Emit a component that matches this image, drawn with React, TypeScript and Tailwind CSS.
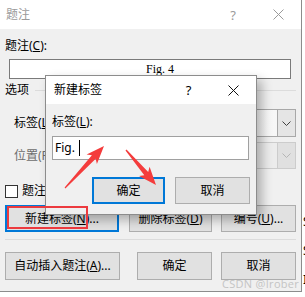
import React from "react";

function XIcon({ color }: { color: string }) {
  return (
    <svg width="11" height="11" viewBox="0 0 11 11">
      <path d="M0.5 0.5 L10.5 10.5 M10.5 0.5 L0.5 10.5" stroke={color} strokeWidth="1" fill="none" />
    </svg>
  );
}

function Chevron({ color }: { color: string }) {
  return (
    <svg width="9" height="5" viewBox="0 0 9 5">
      <path d="M0.5 0.5 L4.5 4.5 L8.5 0.5" stroke={color} strokeWidth="1" fill="none" />
    </svg>
  );
}

function Btn({
  w,
  h,
  focused,
  children,
}: {
  w: string;
  h: string;
  focused?: boolean;
  children: React.ReactNode;
}) {
  return (
    <div
      className={`${w} ${h} flex items-center justify-center bg-[#e1e1e1] ${
        focused ? "border-2 border-[#0078d7]" : "border border-[#adadad]"
      } text-black`}
    >
      {children}
    </div>
  );
}

function Arrow({ x1, y1, x2, y2 }: { x1: number; y1: number; x2: number; y2: number }) {
  const dx = x2 - x1;
  const dy = y2 - y1;
  const L = Math.hypot(dx, dy);
  const ux = dx / L;
  const uy = dy / L;
  const nx = -uy;
  const ny = ux;
  const hd = 15;
  const w1 = 2.6;
  const w2 = 7;
  const pt = (a: number, b: number) => `${(x1 + ux * a + nx * b).toFixed(1)},${(y1 + uy * a + ny * b).toFixed(1)}`;
  const pts = [
    pt(0, 0.6),
    pt(L - hd, w1),
    pt(L - hd - 3, w2),
    pt(L, 0),
    pt(L - hd - 3, -w2),
    pt(L - hd, -w1),
    pt(0, -0.6),
  ].join(" ");
  return <polygon points={pts} fill="#f43c3c" />;
}

export default function App() {
  return (
    <div className="relative w-[305px] h-[297px] overflow-hidden bg-white font-['Noto_Sans','Noto_Sans_CJK_SC',sans-serif] text-[12px] leading-[16px] text-black">
      {/* Main dialog */}
      <div className="w-[302px] h-[292px] flex flex-col border-r border-b border-[#8c8c8c] bg-[#f0f0f0]">
        {/* title bar */}
        <div className="h-[29px] flex items-center bg-white shrink-0">
          <div className="flex-1 pl-[6px] text-[#9a9a9a]">题注</div>
          <div className="w-[46px] flex justify-center text-[#9a9a9a] text-[13px]">?</div>
          <div className="w-[45px] flex justify-center">
            <XIcon color="#9a9a9a" />
          </div>
        </div>
        {/* body */}
        <div className="flex flex-col pl-[5px]">
          <div className="mt-[9px] h-[16px]">
            题注(<span className="underline">C</span>):
          </div>
          <div className="mt-[5px] ml-[4px] w-[282px] h-[20px] bg-white border border-[#7a7a7a] flex items-center justify-center pl-[20px] font-['Liberation_Serif',serif] text-[12px]">
            Fig. 4
          </div>
          <div className="mt-[3px] h-[16px] flex items-center">
            <span>选项</span>
            <div className="ml-[6px] w-[261px] h-px bg-[#dcdcdc]" />
          </div>
          <div className="mt-[11px] h-[28px] flex items-center pl-[9px]">
            <span className="w-[61px]">
              标签(<span className="underline">L</span>)
            </span>
            <div className="flex-1 mr-[5px] h-[28px] flex border border-[#a8a8a8] bg-white">
              <div className="flex-1 bg-gradient-to-r from-white to-[#f7f7f7]" />
              <div className="w-[18px] bg-[#e5e5e5] border-l border-[#a8a8a8] flex items-center justify-center">
                <Chevron color="#404040" />
              </div>
            </div>
          </div>
          <div className="mt-[5px] h-[27px] flex items-center pl-[9px]">
            <span className="w-[61px] text-[#6d6d6d]">位置(P)</span>
            <div className="flex-1 mr-[5px] h-[27px] flex border border-[#cccccc] bg-[#ececec]">
              <div className="flex-1" />
              <div className="w-[18px] bg-[#e0e0e0] border-l border-[#cccccc] flex items-center justify-center">
                <Chevron color="#b5b5b5" />
              </div>
            </div>
          </div>
          <div className="mt-[14px] h-[16px] flex items-center">
            <div className="w-[13px] h-[13px] bg-white border border-[#333333]" />
            <span className="ml-[4px]">题注中不包含标签(E)</span>
          </div>
          <div className="mt-[6px] flex items-center">
            <Btn w="w-[114px]" h="h-[27px]" focused>
              新建标签(<span className="underline">N</span>)...
            </Btn>
            <div className="ml-[10px]">
              <Btn w="w-[83px]" h="h-[27px]">
                删除标签(<span className="underline">D</span>)
              </Btn>
            </div>
            <div className="ml-[9px]">
              <Btn w="w-[75px]" h="h-[27px]">
                编号(<span className="underline">U</span>)...
              </Btn>
            </div>
          </div>
          <div className="mt-[7px] w-[291px] h-px bg-[#dcdcdc]" />
          <div className="mt-[12px] flex items-center">
            <Btn w="w-[115px]" h="h-[28px]">
              自动插入题注(<span className="underline">A</span>)...
            </Btn>
            <div className="ml-[17px]">
              <Btn w="w-[75px]" h="h-[28px]">确定</Btn>
            </div>
            <div className="ml-[9px]">
              <Btn w="w-[75px]" h="h-[28px]">取消</Btn>
            </div>
          </div>
        </div>
      </div>

      {/* clipped text on the right edge */}
      <span className="absolute left-[303px] top-[214px] text-[12px]">S</span>
      <span className="absolute left-[303px] top-[243px] text-[12px]">S</span>
      <span className="absolute left-[303px] top-[272px] text-[12px]">I</span>

      {/* Sub dialog */}
      <div className="absolute left-[45px] top-[75px] w-[212px] h-[140px] flex flex-col border border-[#8c8c8c] bg-[#f0f0f0] shadow-[5px_5px_10px_rgba(0,0,0,0.28)]">
        <div className="h-[28px] flex items-center bg-white shrink-0">
          <div className="flex-1 pl-[8px]">新建标签</div>
          <div className="w-[45px] flex justify-center text-[13px]">?</div>
          <div className="w-[45px] flex justify-center">
            <XIcon color="#111111" />
          </div>
        </div>
        <div className="flex flex-col pl-[6px]">
          <div className="mt-[10px] h-[16px]">
            标签(<span className="underline">L</span>):
          </div>
          <div className="mt-[6px] w-[197px] h-[24px] bg-white border border-[#a0a0a0] flex items-center pl-[2px]">
            <span>Fig.</span>
            <span className="ml-[4px] w-px h-[16px] bg-black" />
          </div>
          <div className="mt-[17px] flex items-center">
            <div className="ml-[40px]">
              <Btn w="w-[73px]" h="h-[27px]" focused>
                确定
              </Btn>
            </div>
            <div className="ml-[10px]">
              <Btn w="w-[75px]" h="h-[27px]">取消</Btn>
            </div>
          </div>
        </div>
      </div>

      {/* red highlight rectangle */}
      <div className="absolute left-[7px] top-[206px] w-[81px] h-[23px] border-2 border-[#ec3a3e]" />

      {/* arrows */}
      <svg className="absolute left-0 top-0 pointer-events-none" width="305" height="297">
        <Arrow x1={65} y1={188} x2={104} y2={146} />
        <Arrow x1={126} y1={150} x2={156} y2={185} />
      </svg>

      {/* watermark */}
      <span className="absolute left-[222px] top-[277px] text-[11px] leading-[14px] text-[#c4c4c4] font-['Open_Sans',sans-serif] tracking-[0.3px]">
        CSDN @Irober
      </span>
    </div>
  );
}
